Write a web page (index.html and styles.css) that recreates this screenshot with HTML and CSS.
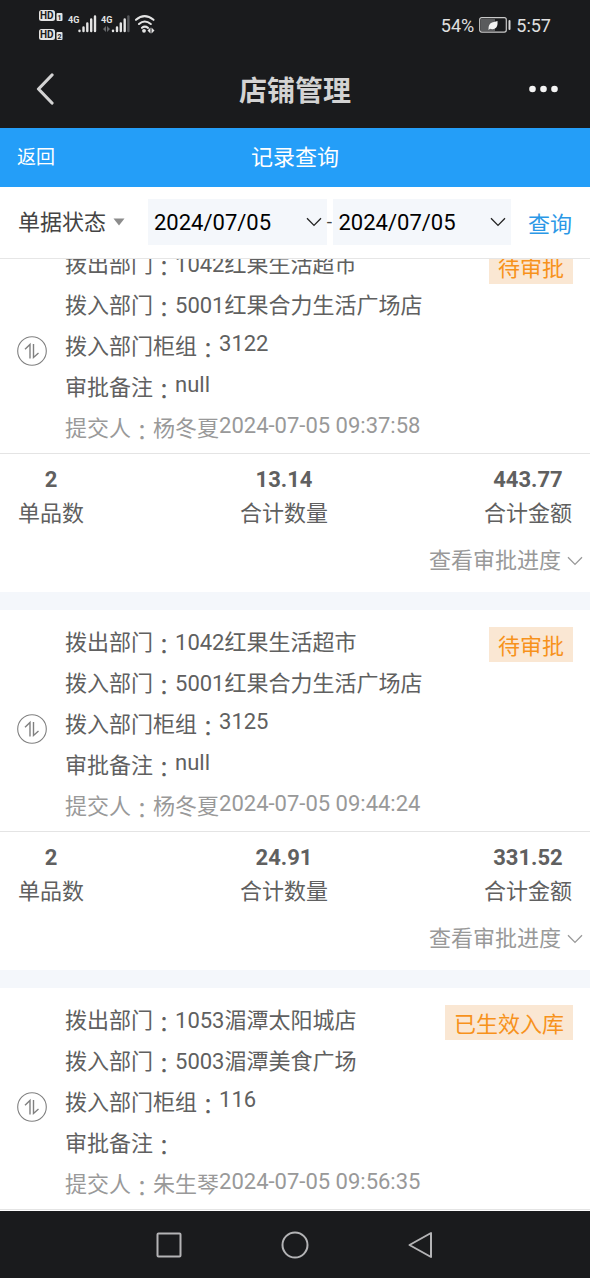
FILE: index.html
```html
<!DOCTYPE html>
<html lang="zh-CN">
<head>
<meta charset="utf-8">
<meta name="viewport" content="width=device-width, initial-scale=1">
<title>店铺管理</title>
<link rel="stylesheet" href="styles.css">
</head>
<body>
<svg class="defs" width="0" height="0" aria-hidden="true">
  <symbol id="chevron" viewBox="0 0 16 10"><path d="M1 1.2 8 8.4 15 1.2" fill="none" stroke="currentColor" stroke-width="1.3"/></symbol>
  <symbol id="transfer" viewBox="0 0 30 30">
    <circle cx="15" cy="15" r="14.3" fill="none" stroke="currentColor" stroke-width="1.1"/>
    <path d="M8 13.300 13 8.500V22.500M16.500 8V21.500L21.500 17" fill="none" stroke="currentColor" stroke-width="1.400"/>
  </symbol>
</svg>
<div class="screen">
  <header class="status">
    <svg class="status-icons" width="120" height="36" viewBox="0 0 120 36" role="img" aria-label="信号">
      <g fill="#e4e4e4">
        <rect x="1" y="3" width="16" height="11" rx="2.500"/><rect x="18.500" y="6" width="6" height="8" rx="1"/>
        <rect x="1" y="22" width="16" height="11" rx="2.500"/><rect x="18.500" y="25" width="6" height="8" rx="1"/>
      </g>
      <g class="tiny">
        <text x="2" y="12">HD</text><text class="sub" x="19.500" y="13">1</text>
        <text x="2" y="31">HD</text><text class="sub" x="19.500" y="32">2</text>
      </g>
      <g class="net"><text x="30" y="16">4G</text><text x="63" y="16">4G</text></g>
      <g stroke="#e4e4e4" stroke-width="2.4" stroke-linecap="round">
        <path d="M41.5 23.600v.4M45.5 20.500V24M49.3 16.500V24M53.2 12.500V24M57 9.500V24"/>
        <path d="M75 23.600v.4M79 20.500V24M82.8 16.500V24M86.7 12.500V24"/>
      </g>
      <path d="M90.4 9.5V24" stroke="#55575a" stroke-width="2.4" stroke-linecap="round"/>
      <path d="m65 22 3-3v6zM72 22l-3-3v6z" fill="#66686b"/>
      <g fill="none" stroke="#e4e4e4" stroke-width="2.1" stroke-linecap="round">
        <path d="M98 12.8q8.500-7.400 17.500 0M101 17q5.600-5 11.800 0M104 20.800q2.800-2.400 6 0"/>
      </g>
      <circle cx="106" cy="23.800" r="1.900" fill="#e4e4e4"/>
      <path d="m109.500 23.500 3-3v6zM116.500 23.500l-3-3v6z" fill="#e4e4e4"/>
    </svg>
    <div class="status-right">
      <span>54%</span>
      <svg width="32" height="16" viewBox="0 0 32 16" aria-hidden="true">
        <rect x=".7" y=".7" width="26.600" height="14.400" rx="2" fill="none" stroke="#c9c9c9" stroke-width="1.200"/>
        <rect x="2" y="2" width="14" height="12" fill="#5a5b5d"/>
        <path d="M9.500 13q-.500-6 3.500-7.500 3-1 5.500-1.500.500 6-2.500 7.500-2.500 1.200-5 .2z" fill="#f2f2f2"/>
        <path d="M30.500 4v8" stroke="#d5d5d5" stroke-width="2" stroke-linecap="round"/>
      </svg>
      <span>5:57</span>
    </div>
  </header>

  <div class="appbar">
    <button class="plain back" aria-label="返回上一页"><svg width="22" height="32" viewBox="-4 0 22 32"><path d="M16 2 2.500 16 16 30" fill="none" stroke="#d3d3d3" stroke-width="3.200" stroke-linecap="round" stroke-linejoin="round"/></svg></button>
    <h1>店铺管理</h1>
    <button class="plain more" aria-label="更多"><svg width="30" height="8" viewBox="0 0 30 8" fill="#f4f4f4"><circle cx="4.500" cy="4" r="3.300"/><circle cx="15.500" cy="4" r="3.300"/><circle cx="26.500" cy="4" r="3.300"/></svg></button>
  </div>

  <nav class="titlebar">
    <a href="#" class="return">返回</a>
    <h2>记录查询</h2>
  </nav>

  <form class="filter">
    <label class="state">
      <select aria-label="单据状态"><option>单据状态</option></select>
      <svg width="12" height="8" viewBox="0 0 12 8" aria-hidden="true"><path d="M.500.500h11L6 7.500z" fill="#8c8c8c"/></svg>
    </label>
    <div class="range">
      <label class="date"><input type="text" value="2024/07/05" aria-label="开始日期"><svg width="16" height="10"><use href="#chevron"/></svg></label>
      <span>-</span>
      <label class="date"><input type="text" value="2024/07/05" aria-label="结束日期"><svg width="16" height="10"><use href="#chevron"/></svg></label>
    </div>
    <button class="plain query" type="button">查询</button>
  </form>

  <main class="list">
    <article class="card scrolled">
      <div class="info">
        <svg class="kind" width="30" height="30"><use href="#transfer"/></svg>
        <div class="lines">
          <p>拨出部门<i>：</i>1042红果生活超市</p>
          <p>拨入部门<i>：</i>5001红果合力生活广场店</p>
          <p>拨入部门柜组<i>：</i><span>3122</span></p>
          <p>审批备注<i>：</i><span>null</span></p>
          <p class="by">提交人<i>：</i>杨冬夏<span>2024-07-05 09:37:58</span></p>
        </div>
        <strong class="badge">待审批</strong>
      </div>
      <dl class="stats">
        <div><dt>单品数</dt><dd>2</dd></div>
        <div><dt>合计数量</dt><dd>13.14</dd></div>
        <div><dt>合计金额</dt><dd>443.77</dd></div>
      </dl>
      <button class="plain progress">查看审批进度<svg width="16" height="10"><use href="#chevron"/></svg></button>
    </article>

    <article class="card">
      <div class="info">
        <svg class="kind" width="30" height="30"><use href="#transfer"/></svg>
        <div class="lines">
          <p>拨出部门<i>：</i>1042红果生活超市</p>
          <p>拨入部门<i>：</i>5001红果合力生活广场店</p>
          <p>拨入部门柜组<i>：</i><span>3125</span></p>
          <p>审批备注<i>：</i><span>null</span></p>
          <p class="by">提交人<i>：</i>杨冬夏<span>2024-07-05 09:44:24</span></p>
        </div>
        <strong class="badge">待审批</strong>
      </div>
      <dl class="stats">
        <div><dt>单品数</dt><dd>2</dd></div>
        <div><dt>合计数量</dt><dd>24.91</dd></div>
        <div><dt>合计金额</dt><dd>331.52</dd></div>
      </dl>
      <button class="plain progress">查看审批进度<svg width="16" height="10"><use href="#chevron"/></svg></button>
    </article>

    <article class="card">
      <div class="info">
        <svg class="kind" width="30" height="30"><use href="#transfer"/></svg>
        <div class="lines">
          <p>拨出部门<i>：</i>1053湄潭太阳城店</p>
          <p>拨入部门<i>：</i>5003湄潭美食广场</p>
          <p>拨入部门柜组<i>：</i><span>116</span></p>
          <p>审批备注<i>：</i></p>
          <p class="by">提交人<i>：</i>朱生琴<span>2024-07-05 09:56:35</span></p>
        </div>
        <strong class="badge">已生效入库</strong>
      </div>
    </article>
  </main>

  <footer class="sysnav">
    <button class="plain" aria-label="最近任务"><svg width="28" height="28" viewBox="0 0 28 28"><rect x="2.500" y="2.500" width="23" height="23" rx="1" fill="none" stroke="#b4b4b6" stroke-width="2"/></svg></button>
    <button class="plain" aria-label="主屏幕"><svg width="28" height="28" viewBox="0 0 28 28"><circle cx="14" cy="14" r="12.500" fill="none" stroke="#b4b4b6" stroke-width="2"/></svg></button>
    <button class="plain" aria-label="返回"><svg width="28" height="28" viewBox="0 0 28 28"><path d="M24 2v24L2.500 14z" fill="none" stroke="#b4b4b6" stroke-width="2" stroke-linejoin="round"/></svg></button>
  </footer>
</div>
</body>
</html>
```
FILE: styles.css
```css
* { box-sizing: border-box; }

body {
  margin: 0;
  font-family: Roboto, "Noto Sans CJK SC", sans-serif;
  font-size: 22px;
  color: #606060;
  background: #fff;
}

h1, h2, p, dl, dd { margin: 0; }
svg { display: block; flex: none; }
.defs { position: absolute; }

.plain {
  padding: 0;
  border: 0;
  background: none;
  font: inherit;
  color: inherit;
}

.screen {
  display: flex;
  flex-direction: column;
  height: 100vh;
}

.screen > * { flex: none; }

/* status bar */
.status {
  display: flex;
  justify-content: space-between;
  align-items: center;
  height: 50px;
  padding: 0 39px 0 38px;
  background: #1a1b1d;
  color: #e0e0e0;
  font-size: 18px;
}

.status-right { display: flex; align-items: center; gap: 5px; }
.tiny { font: bold 10px Roboto, sans-serif; fill: #1a1b1d; }
.tiny .sub { font-size: 7px; }
.net { font: bold 9px Roboto, sans-serif; fill: #e4e4e4; }

/* app bar */
.appbar {
  display: grid;
  grid-template-columns: 1fr auto 1fr;
  align-items: center;
  height: 78px;
  padding: 0 32px;
  background: #1a1b1d;
  color: #d3d3d3;
}

.appbar h1 {
  font-family: "Noto Sans CJK SC", sans-serif;
  font-size: 28px;
  font-weight: 700;
  line-height: 38px;
}

.back { justify-self: start; }
.more { justify-self: end; }

.titlebar {
  display: grid;
  grid-template-columns: 1fr auto 1fr;
  align-items: center;
  height: 59px;
  padding: 0 17px;
  background: #249ef8;
  color: #fff;
  line-height: 30px;
}

.titlebar h2 { font-size: 22px; font-weight: 400; }
.return { color: inherit; font-size: 19px; text-decoration: none; }

/* filter */
.filter {
  display: flex;
  align-items: center;
  gap: 17px;
  padding: 12px 18px 13px;
  border-bottom: 1px solid #e6e6e6;
  color: #444;
}

.state { display: flex; align-items: center; gap: 6px; margin-right: 6px; }

.state select {
  appearance: none;
  padding: 0;
  border: 0;
  background: none;
  font: inherit;
  color: inherit;
}

.range { display: flex; flex: 1; align-items: center; min-width: 0; }
.range span { width: 6px; text-align: center; line-height: 46px; font-size: 19px; }

.date {
  display: flex;
  flex: 1;
  align-items: center;
  min-width: 0;
  height: 46px;
  padding: 0 5px 0 6px;
  background: #f4f7fb;
  color: #222;
}

.date input {
  flex: 1;
  min-width: 0;
  padding: 0;
  border: 0;
  background: none;
  font: inherit;
  color: #000;
}

.query {
  font-family: "Noto Sans CJK SC", sans-serif;
  color: #2b98e6;
  line-height: 46px;
}

/* records */
.screen > .list {
  flex: 1;
  min-height: 0;
  overflow-y: auto;
  scrollbar-width: none;
}

.card { border-bottom: 18px solid #f4f7fb; }
.card:last-child { border-bottom: 0; }
.scrolled { margin-top: -27px; }

.info {
  display: flex;
  align-items: flex-start;
  padding: 12px 17px 4px;
  border-bottom: 1px solid #e4e4e4;
}

.kind { align-self: center; margin: 9px 18px 0 0; color: #808080; }
.lines { flex: 1; min-width: 0; }
.lines p { display: flex; line-height: 41px; }

.lines i {
  padding-top: 3px;
  font-family: "Noto Sans CJK TC", sans-serif;
  font-style: normal;
  line-height: 38px;
}

.lines span { line-height: 36px; }
.by { color: #999; }

.badge {
  margin-top: 5px;
  padding: 0 9px;
  background: #fae7d3;
  color: #f7921c;
  font-family: "Noto Sans CJK SC", sans-serif;
  font-weight: 400;
  line-height: 35px;
}

.stats {
  display: flex;
  justify-content: space-between;
  padding: 9px 18px 0;
  line-height: 34px;
  text-align: center;
}

.stats div { display: flex; flex-direction: column-reverse; }
.stats dd { font-weight: 700; }

.progress {
  display: flex;
  align-items: center;
  gap: 6px;
  margin: 13px 7px 14px auto;
  line-height: 34px;
  color: #999;
}

/* system navigation */
.sysnav {
  display: flex;
  justify-content: center;
  align-items: center;
  gap: 98px;
  height: 67px;
  background: #1a1b1d;
}
```
